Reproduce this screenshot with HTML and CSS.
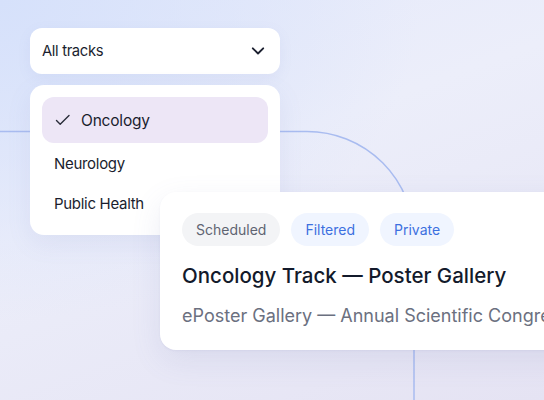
FILE: index.html
```html
<!DOCTYPE html>
<html lang="en">
<head>
<meta charset="utf-8">
<title>Tracks</title>
<link rel="stylesheet" href="styles.css">
</head>
<body>
<div class="stage">
  <svg class="deco" width="544" height="400" viewBox="0 0 544 400" aria-hidden="true">
    <path d="M0 131.5 H307 A107 107 0 0 1 414 238.5 V400" fill="none" stroke="#a9bcf0" stroke-width="1.5"/>
  </svg>

  <div class="picker">
    <div class="select">
      <span class="select-label">All tracks</span>
      <svg class="chevron" width="14" height="14" viewBox="0 0 14 14" aria-hidden="true">
        <path d="M1.8 4.3 L7 9.5 L12.2 4.3" fill="none" stroke="#1c2030" stroke-width="1.9" stroke-linecap="round" stroke-linejoin="round"/>
      </svg>
    </div>
    <ul class="menu">
      <li class="item item-active">
        <svg class="check" width="16" height="16" viewBox="0 0 16 16" aria-hidden="true">
          <path d="M1.5 8.6 L5.2 12.2 L14 3.6" fill="none" stroke="#2a2d3a" stroke-width="1.4" stroke-linecap="round" stroke-linejoin="round"/>
        </svg>
        <span>Oncology</span>
      </li>
      <li class="item">Neurology</li>
      <li class="item">Public Health</li>
    </ul>
  </div>

  <div class="card">
    <div class="chips">
      <span class="chip chip-muted">Scheduled</span>
      <span class="chip chip-blue">Filtered</span>
      <span class="chip chip-blue">Private</span>
    </div>
    <h2 class="title">Oncology Track — Poster Gallery</h2>
    <p class="subtitle">ePoster Gallery — Annual Scientific Congress 2025</p>
  </div>
</div>
</body>
</html>
```

FILE: styles.css
```css
html, body {
  margin: 0;
  padding: 0;
}

body {
  width: 544px;
  height: 400px;
  overflow: hidden;
  font-family: Inter, "Noto Sans", sans-serif;
}

.stage {
  position: relative;
  width: 544px;
  height: 400px;
  overflow: hidden;
  background:
    radial-gradient(ellipse 420px 320px at 0% 0%, #d6e1fb 0%, rgba(214, 225, 251, 0) 100%),
    linear-gradient(160deg, #e4e9fb 0%, #eceefa 40%, #e5e3f3 100%);
  box-sizing: border-box;
  padding: 28px 0 0 30px;
}

.deco {
  position: absolute;
  left: 0;
  top: 0;
}

.picker {
  position: relative;
  width: 250px;
  display: flex;
  flex-direction: column;
  gap: 11px;
}

.select {
  height: 46px;
  box-sizing: border-box;
  background: #ffffff;
  border-radius: 12px;
  display: flex;
  align-items: center;
  justify-content: space-between;
  padding: 0 15px 0 12px;
  box-shadow: 0 4px 14px rgba(120, 130, 190, 0.08);
}

.select-label {
  font-size: 14.8px;
  color: #1a1e2e;
  letter-spacing: -0.35px;
}

.chevron {
  display: block;
}

.menu {
  list-style: none;
  margin: 0;
  padding: 12px;
  background: #ffffff;
  border-radius: 14px;
  box-shadow: 0 8px 24px rgba(120, 130, 190, 0.10);
}

.item {
  height: 40px;
  display: flex;
  align-items: center;
  padding: 0 12px;
  font-size: 15px;
  color: #1a1e2e;
  letter-spacing: -0.3px;
}

.item-active {
  height: 46px;
  background: #ede6f6;
  border-radius: 12px;
  gap: 10px;
  font-size: 15.5px;
  letter-spacing: -0.2px;
}

.check {
  display: block;
  margin-left: 1px;
}

.card {
  position: absolute;
  left: 160px;
  top: 192px;
  width: 420px;
  height: 158px;
  box-sizing: border-box;
  background: #ffffff;
  border-radius: 16px;
  padding: 21px 22px 0;
  box-shadow: 0 10px 30px rgba(110, 115, 170, 0.12), 0 1px 2px rgba(110, 115, 170, 0.08);
}

.chips {
  display: flex;
  gap: 11px;
}

.chip {
  height: 33px;
  display: flex;
  align-items: center;
  padding: 0 14px;
  border-radius: 17px;
  font-size: 14px;
}

.chip-muted {
  background: #f3f4f6;
  color: #5f6472;
}

.chip-blue {
  background: #f0f5ff;
  color: #3d70e0;
}

.title {
  margin: 17px 0 0;
  font-size: 20.5px;
  font-weight: 500;
  color: #131a2b;
  letter-spacing: 0;
  white-space: nowrap;
}

.subtitle {
  margin: 17px 0 0;
  font-size: 18px;
  color: #6b7080;
  white-space: nowrap;
}
```
